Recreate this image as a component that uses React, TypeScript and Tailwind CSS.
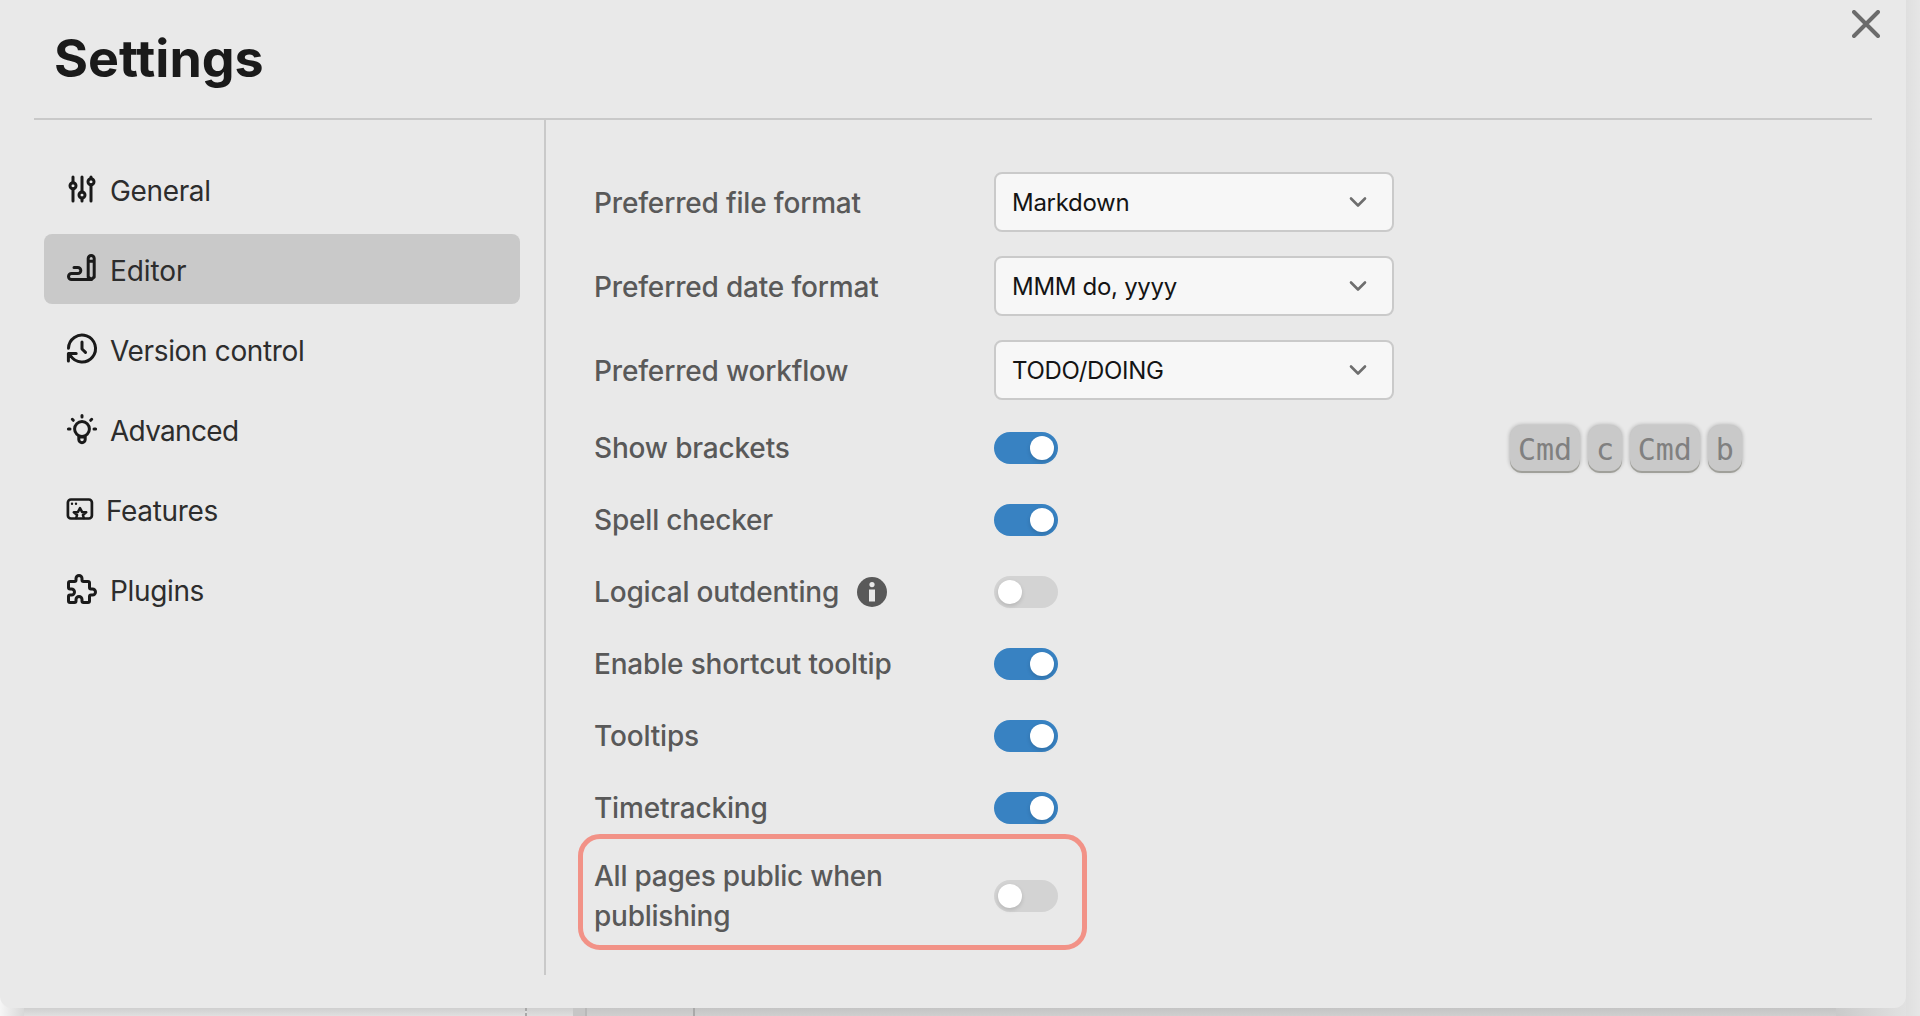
import type { ReactNode } from 'react';

function Icon({ children }: { children: ReactNode }) {
  return (
    <svg
      width="32"
      height="32"
      viewBox="0 0 32 32"
      fill="none"
      stroke="#1a1a1a"
      strokeWidth="3"
      strokeLinecap="round"
      strokeLinejoin="round"
      className="shrink-0 overflow-visible"
    >
      {children}
    </svg>
  );
}

const icons = {
  general: (
    <Icon>
      <path d="M7 4v5.7M7 15.7V28M16 4v15M16 25v3M25 4v1.7M25 11.7V28" />
      <circle cx="7" cy="12.7" r="3" />
      <circle cx="16" cy="22" r="3" />
      <circle cx="25" cy="8.7" r="3" />
    </Icon>
  ),
  editor: (
    <Icon>
      <path d="M8 14.5h3.8a3 3 0 0 1 0 6H5.5a3 3 0 0 0 0 6h19.7" />
      <path d="M22.2 5.5a3 3 0 0 1 6 0V24l-3 2.5-3-2.5zM22.2 8.2h6" />
    </Icon>
  ),
  version: (
    <Icon>
      <path d="M2.5 15.3A13.5 13.5 0 1 1 4.6 22.8M2.4 28v-7.5h7.8M16 9v7l3.5 3.4" />
    </Icon>
  ),
  advanced: (
    <Icon>
      <circle cx="16" cy="16" r="7.4" />
      <path d="M12.8 23.5v3a3.2 3.2 0 0 0 6.4 0v-3M13 24h6" />
      <path d="M16 2.4v1.6M2.4 16h1.6M28 16h1.6M6.3 6.3l1 1M25.7 6.3l-1 1" />
    </Icon>
  ),
  features: (
    <Icon>
      <rect x="1.9" y="6.5" width="24" height="19" rx="3" strokeWidth="2.7" />
      <path d="M6 10.8h.01M10 10.8h.01" strokeWidth="2.4" />
      <path
        d="M10.2 25l.9-3-3.3-2.7 4.2-.4L14 15l2 3.9 4.2.4-3.3 2.7.9 3"
        strokeWidth="2.5"
      />
    </Icon>
  ),
  plugins: (
    <Icon>
      <path
        transform="translate(-2 -2) scale(1.5)"
        strokeWidth="2"
        d="M4 7h3a1 1 0 0 0 1-1v-1a2 2 0 0 1 4 0v1a1 1 0 0 0 1 1h3a1 1 0 0 1 1 1v3a1 1 0 0 0 1 1h1a2 2 0 0 1 0 4h-1a1 1 0 0 0-1 1v3a1 1 0 0 1-1 1h-3a1 1 0 0 1-1-1v-1a2 2 0 0 0-4 0v1a1 1 0 0 1-1 1h-3a1 1 0 0 1-1-1v-3a1 1 0 0 1 1-1h1a2 2 0 0 0 0-4h-1a1 1 0 0 1-1-1v-3a1 1 0 0 1 1-1"
      />
    </Icon>
  ),
};

function NavItem({
  icon,
  label,
  active,
  tight,
  tracking = 'tracking-[-0.35px]',
}: {
  icon: ReactNode;
  label: string;
  active?: boolean;
  tight?: boolean;
  tracking?: string;
}) {
  return (
    <button
      className={`flex h-[70px] w-[476px] items-center rounded-lg pl-[22px] text-left text-[28px] text-[#2d2d2d] ${
        active ? 'bg-[#c9c9c9]' : ''
      } ${tight ? 'gap-[8px]' : 'gap-[12px]'}`}
    >
      {icon}
      <span className={`pt-[4px] ${tracking}`}>{label}</span>
    </button>
  );
}

function SelectRow({ label, value }: { label: string; value: string }) {
  return (
    <div className="flex h-[60px] items-center">
      <label className="w-[400px] shrink-0 pt-[1px]">{label}</label>
      <button className="flex h-[60px] w-[400px] items-center justify-between rounded-lg border-2 border-[#cacaca] bg-[#f7f7f7] pr-[24px] pl-[16px] text-[24px] font-normal tracking-[-0.3px] text-[#141414]">
        <span className="pt-[2px]">{value}</span>
        <svg width="20" height="12" viewBox="0 0 20 12" fill="none" stroke="#6e6e6e" strokeWidth="2.6" strokeLinecap="round" strokeLinejoin="round">
          <path d="M3 2.5l7 7 7-7" />
        </svg>
      </button>
    </div>
  );
}

function Toggle({ on }: { on?: boolean }) {
  return (
    <span
      className={`flex h-[32px] w-[64px] shrink-0 items-center rounded-full px-[4px] ${
        on ? 'justify-end bg-[#3882c2]' : 'bg-[#d3d3d3]'
      }`}
    >
      <span className="size-[24px] rounded-full bg-white shadow-[0_2px_4px_rgba(0,0,0,0.14)]" />
    </span>
  );
}

function ToggleRow({ label, on, info, children }: { label: string; on?: boolean; info?: boolean; children?: ReactNode }) {
  return (
    <div className="flex h-[40px] items-center">
      <div className="flex w-[400px] shrink-0 items-center gap-[18px]">
        <span>{label}</span>
        {info && (
          <svg width="30" height="30" viewBox="0 0 30 30">
            <circle cx="15" cy="15" r="15" fill="#595959" />
            <circle cx="15" cy="7.6" r="2.6" fill="#e9e9e9" />
            <path d="M12 12.5h6v12h-6z" fill="#e9e9e9" />
          </svg>
        )}
      </div>
      <Toggle on={on} />
      {children}
    </div>
  );
}

function Key({ children }: { children: string }) {
  return (
    <kbd className="flex h-[46px] items-center rounded-[12px] bg-[#c9c9c9] px-[8px] pt-[3px] font-['DejaVu_Sans_Mono',monospace] text-[30px] leading-none font-normal tracking-[-0.1px] text-[#808080] shadow-[0_2px_0_#a0a09a,0_0_4px_rgba(0,0,0,0.3)]">
      {children}
    </kbd>
  );
}

export default function App() {
  return (
    <div className="relative h-[1016px] w-[1920px] overflow-hidden bg-[#e3e3e3] font-['Inter',sans-serif]">
      <div className="absolute inset-x-0 bottom-0 flex h-[20px]">
        <div className="w-[24px] bg-linear-to-r from-[#f6f6f6] to-[#d8d8d8]" />
        <div className="w-[501px] bg-linear-to-b from-[#cfcfcf] from-60% to-[#e0e0e0]" />
        <div className="flex w-[2px] flex-col items-stretch justify-end gap-[2px] bg-[#dedede] pb-0">
          <span className="h-[3px] bg-[#a8a8a8]" />
          <span className="h-[3px] bg-[#a8a8a8]" />
        </div>
        <div className="w-[46px] bg-linear-to-b from-[#cfcfcf] from-60% to-[#dedede]" />
        <div className="w-[12px] bg-[#c6c6c6]" />
        <div className="w-[2px] bg-[#b8b8b8]" />
        <div className="w-[106px] bg-linear-to-b from-[#c6c6c6] from-60% to-[#cfcfcf]" />
        <div className="w-[2px] bg-[#a9a9a9]" />
        <div className="flex-1 bg-linear-to-b from-[#c4c4c4] from-60% to-[#cfcfcf]" />
        <div className="w-[84px] bg-linear-to-r from-[#cacaca] to-[#e6e6e6]" />
      </div>
      <div className="absolute top-0 right-0 h-full w-[14px] bg-linear-to-r from-[#dfdfdf] to-[#e6e6e6]" />
      <main className="relative flex h-[1008px] w-[1906px] flex-col rounded-b-[12px] bg-[#e9e9e9]">
        <header className="mx-[34px] flex h-[120px] items-start justify-between border-b-2 border-[#c9c9c9]">
          <h1 className="pt-[26px] pl-[20px] text-[52px] leading-[66px] font-bold text-[#1a1a1a]">Settings</h1>
          <button aria-label="Close" className="mt-[10px] -mr-[8px]">
            <svg width="28" height="28" viewBox="0 0 28 28" stroke="#6b6b6b" strokeWidth="4" strokeLinecap="round">
              <path d="M2 2l24 24M26 2L2 26" />
            </svg>
          </button>
        </header>
        <div className="flex h-[855px]">
          <nav className="flex w-[546px] shrink-0 flex-col gap-[10px] border-r-2 border-[#c9c9c9] pt-[34px] pl-[44px]">
            <NavItem icon={icons.general} label="General" />
            <NavItem icon={icons.editor} label="Editor" active tracking="tracking-[-0.1px]" />
            <NavItem icon={icons.version} label="Version control" />
            <NavItem icon={icons.advanced} label="Advanced" tracking="tracking-[-0.7px]" />
            <NavItem icon={icons.features} label="Features" tight />
            <NavItem icon={icons.plugins} label="Plugins" />
          </nav>
          <section className="flex flex-1 flex-col pt-[52px] pl-[48px] text-[28px] font-medium tracking-[-0.18px] text-[#595959]">
            <div className="flex flex-col gap-[24px]">
              <SelectRow label="Preferred file format" value="Markdown" />
              <SelectRow label="Preferred date format" value="MMM do, yyyy" />
              <SelectRow label="Preferred workflow" value="TODO/DOING" />
            </div>
            <div className="mt-[28px] flex flex-col gap-[32px]">
              <ToggleRow label="Show brackets" on>
                <div className="ml-[452px] flex gap-[8px]">
                  <Key>Cmd</Key>
                  <Key>c</Key>
                  <Key>Cmd</Key>
                  <Key>b</Key>
                </div>
              </ToggleRow>
              <ToggleRow label="Spell checker" on />
              <ToggleRow label="Logical outdenting" info />
              <ToggleRow label="Enable shortcut tooltip" on />
              <ToggleRow label="Tooltips" on />
              <ToggleRow label="Timetracking" on />
            </div>
            <div className="mt-[6px] -ml-[16px] flex h-[116px] w-[509px] items-center rounded-[22px] border-[5px] border-[#f29287] pt-[8px] pl-[11px]">
              <div className="w-[400px] shrink-0 leading-[40px] tracking-[-0.25px]">
                All pages public when
                <br />
                publishing
              </div>
              <Toggle />
            </div>
          </section>
        </div>
      </main>
    </div>
  );
}
